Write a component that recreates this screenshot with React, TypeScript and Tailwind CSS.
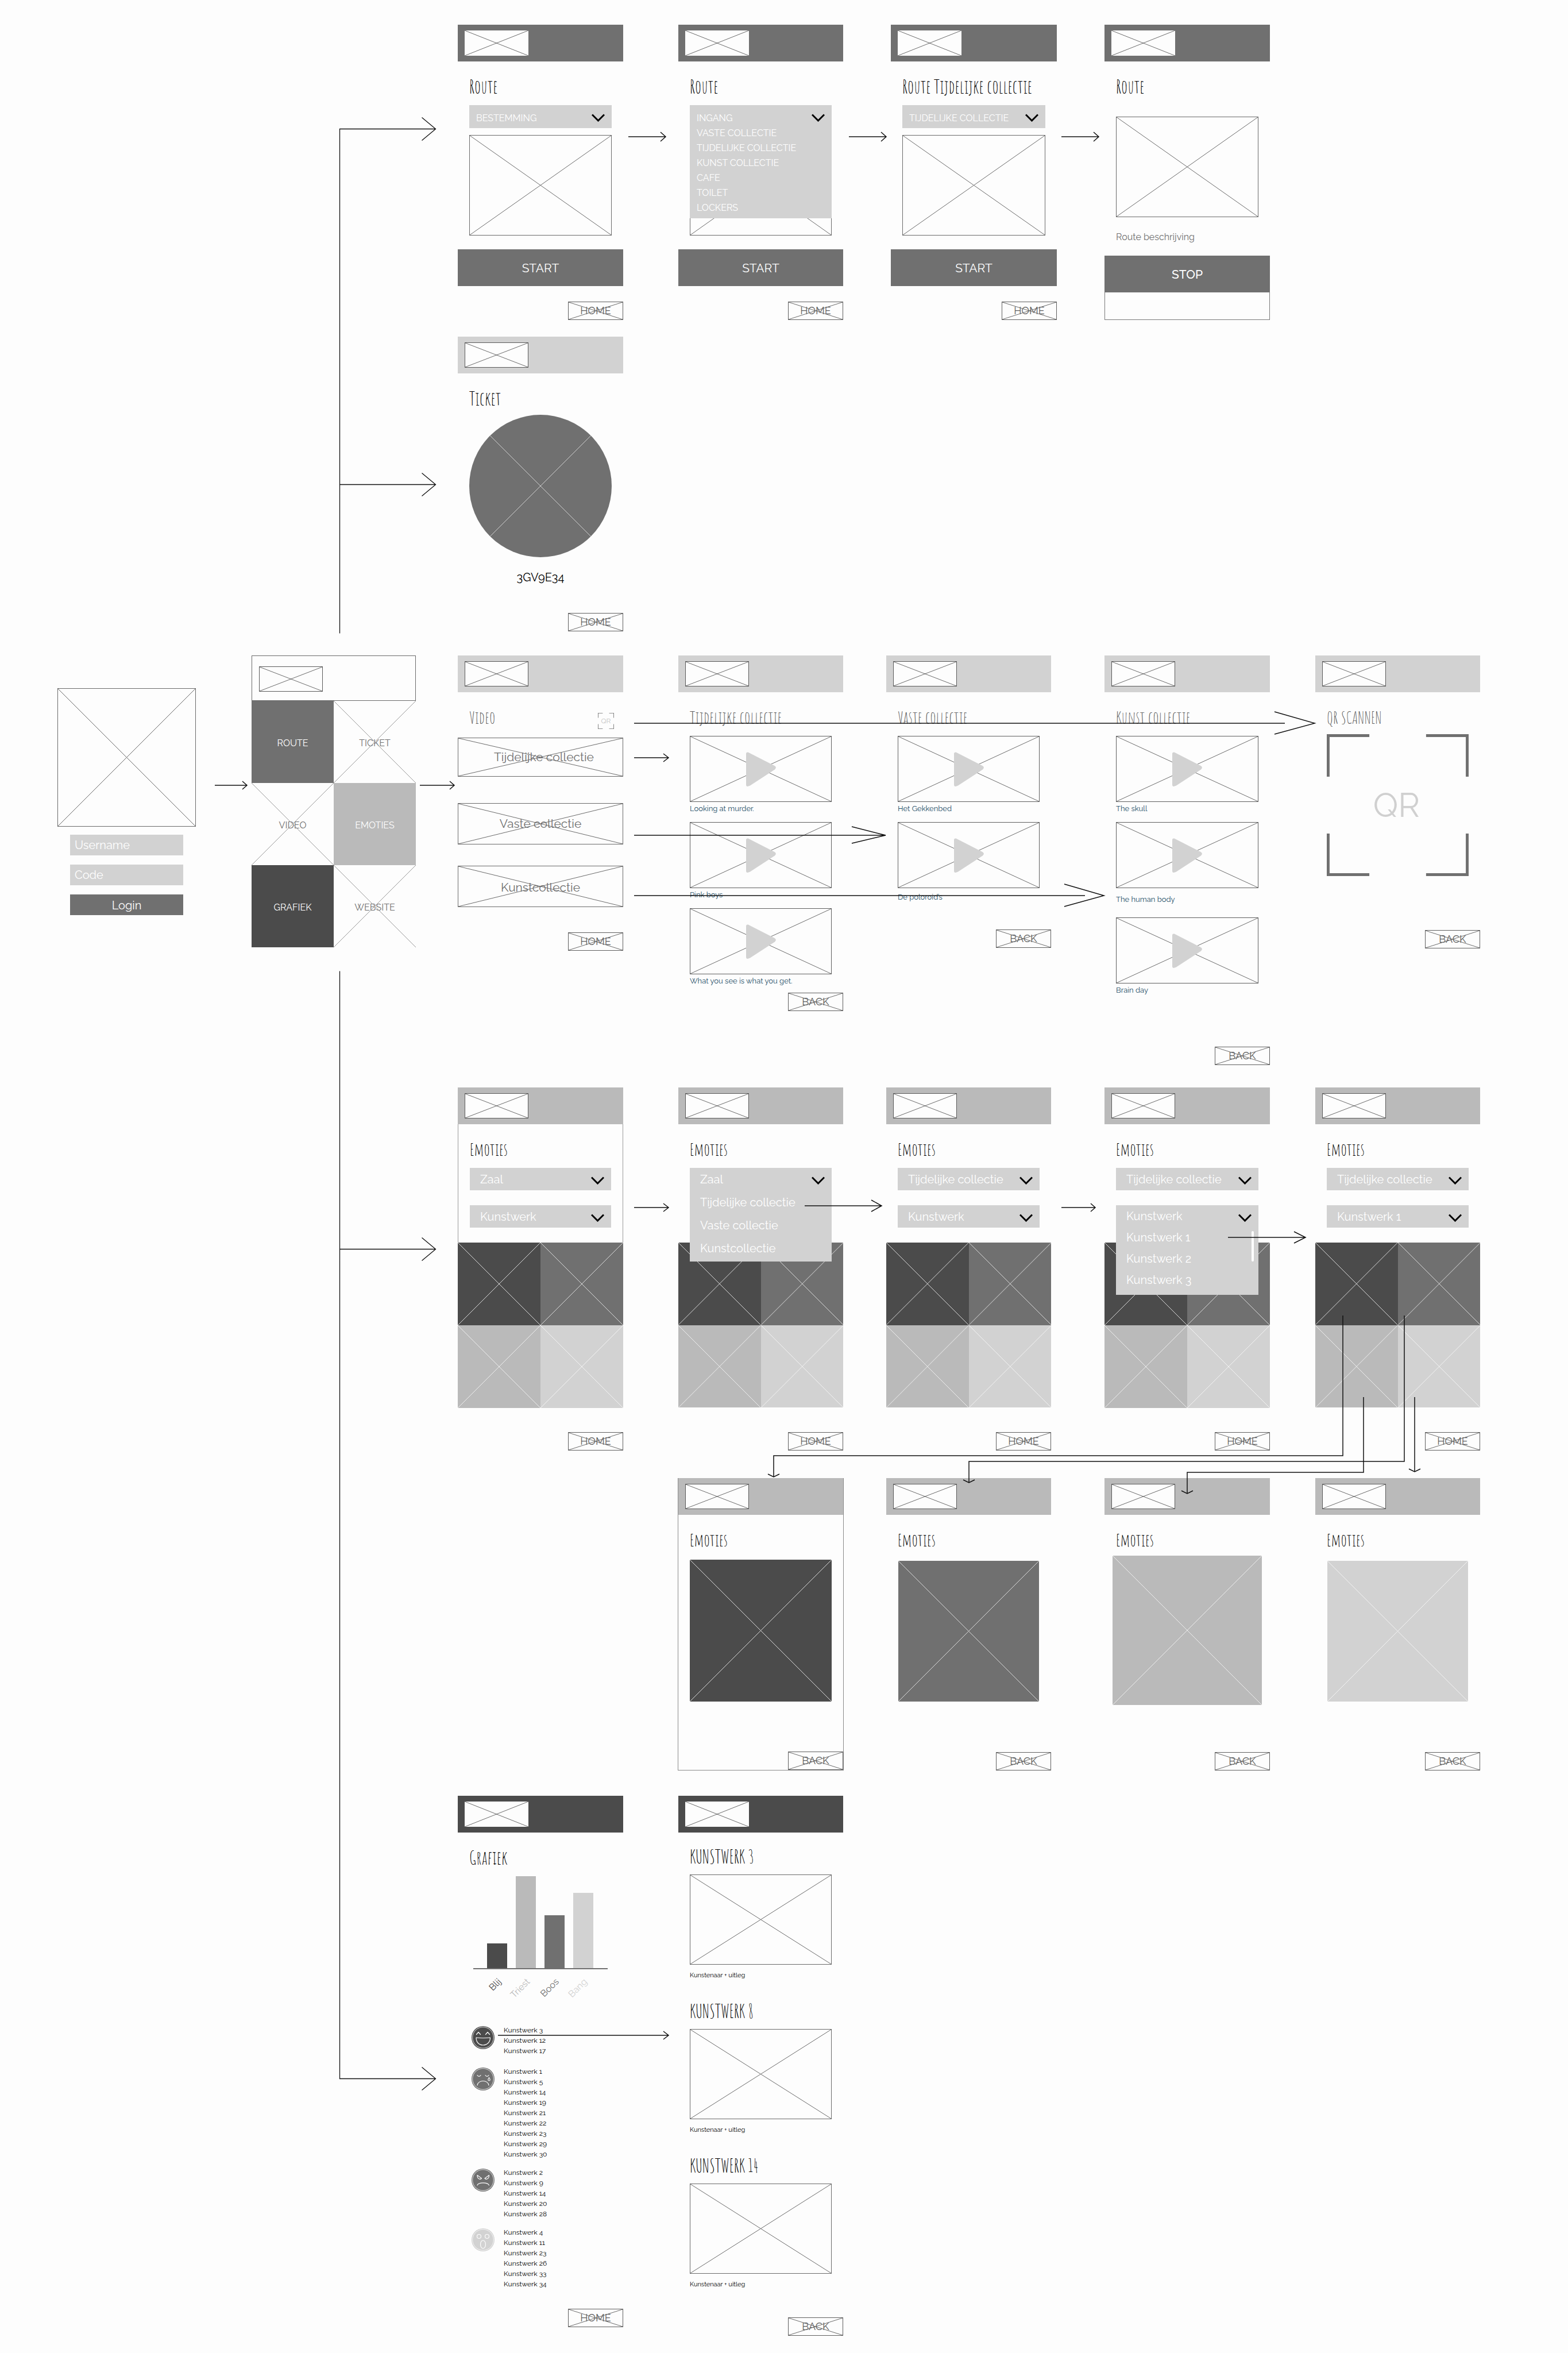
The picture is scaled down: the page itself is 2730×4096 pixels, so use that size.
import React from "react";

const BODY = "font-['Raleway','Lato','Noto_Sans',sans-serif]";
const COLS =
  "grid grid-cols-[100fr_241fr_97fr_286fr_73fr_288fr_96fr_287fr_75fr_287fr_93fr_288fr_79fr_287fr_153fr]";

function Cross({ line = "text-[#6a6a6a]" }: { line?: string }) {
  return (
    <svg
      className={`pointer-events-none absolute inset-0 h-full w-full ${line}`}
      viewBox="0 0 100 100"
      preserveAspectRatio="none"
      fill="none"
      stroke="currentColor"
      aria-hidden="true"
    >
      <path d="M0 0 100 100M100 0 0 100" vectorEffect="non-scaling-stroke" />
    </svg>
  );
}

function Picture({ size }: { size: string }) {
  return (
    <div className={`relative border border-[#6a6a6a] ${size}`}>
      <Cross />
    </div>
  );
}

function Tile({ className, line = "text-[#d8d8d8]" }: { className: string; line?: string }) {
  return (
    <div className={`relative ${className}`}>
      <Cross line={line} />
    </div>
  );
}

function Logo({ bordered = true }: { bordered?: boolean }) {
  return (
    <div
      className={`relative h-11 w-[111px] bg-[#fdfdfd] ${bordered ? "border border-[#5a5a5a]" : ""}`}
    >
      <Cross />
    </div>
  );
}

function Header({ tone, bordered }: { tone: string; bordered?: boolean }) {
  return (
    <header className={`flex h-16 items-center pl-3 ${tone}`}>
      <Logo bordered={bordered} />
    </header>
  );
}

function Title({
  children,
  tone = "text-[32px] text-black",
}: {
  children: React.ReactNode;
  tone?: string;
}) {
  return (
    <h2
      className={`font-['Amatic_SC','Lato',sans-serif] leading-8 whitespace-nowrap ${tone}`}
    >
      {children}
    </h2>
  );
}

const GREY_TITLE = "text-[30px] text-[#606060]";

function Nav({ label, className = "mt-auto" }: { label: string; className?: string }) {
  return (
    <button
      type="button"
      className={`relative h-8 w-24 shrink-0 self-end border border-[#5f5f5f] text-center text-lg leading-[30px] text-[#606060] ${className}`}
    >
      {label}
      <Cross />
    </button>
  );
}

function Chevron() {
  return (
    <svg
      className="pointer-events-none absolute top-[15px] right-3 h-[14px] w-[23px]"
      viewBox="0 0 23 14"
      fill="none"
      stroke="black"
      strokeWidth="3"
      aria-hidden="true"
    >
      <path d="M1 1.500 11.500 12 22 1.500" />
    </svg>
  );
}

function Select({
  label,
  value,
  className,
}: {
  label: string;
  value: string;
  className: string;
}) {
  return (
    <div className="relative">
      <select
        aria-label={label}
        defaultValue={value}
        className={`block w-full appearance-none bg-[#d2d2d2] text-white ${className}`}
      >
        <option>{value}</option>
      </select>
      <Chevron />
    </div>
  );
}

function OpenMenu({
  value,
  items,
  className,
  first,
  row,
  children,
}: {
  value: string;
  items: string[];
  className: string;
  first: string;
  row: string;
  children?: React.ReactNode;
}) {
  return (
    <div className={`absolute inset-x-0 top-0 z-10 bg-[#d2d2d2] text-white ${className}`}>
      <button type="button" aria-expanded="true" className={`block w-full text-left ${first}`}>
        {value}
      </button>
      <ul>
        {items.map((item) => (
          <li key={item} className={row}>
            {item}
          </li>
        ))}
      </ul>
      <Chevron />
      {children}
    </div>
  );
}

function BarButton({ label, className }: { label: string; className: string }) {
  return (
    <button type="button" className={`h-16 bg-[#707070] pt-0.5 text-[21px] text-white ${className}`}>
      {label}
    </button>
  );
}

function RouteScreen({
  title,
  col,
  children,
}: {
  title: string;
  col: string;
  children: React.ReactNode;
}) {
  return (
    <section className={`flex min-w-0 flex-col ${col}`}>
      <Header tone="bg-[#707070]" bordered={false} />
      <div className="px-5 pt-7">
        <Title>{title}</Title>
        <div className="relative mt-4 mb-3 h-10">{children}</div>
        <Picture size="h-[175px]" />
      </div>
      <BarButton label="START" className="mt-6" />
      <Nav label="HOME" className="mt-[27px]" />
    </section>
  );
}

function MenuCell({
  label,
  className,
  crossed,
}: {
  label: string;
  className: string;
  crossed?: boolean;
}) {
  return (
    <button type="button" className={`relative aspect-square pt-1 text-base ${className}`}>
      {label}
      {crossed && <Cross line="text-[#9a9a9a]" />}
    </button>
  );
}

function Video({ caption, gap = "" }: { caption: string; gap?: string }) {
  return (
    <figure>
      <div className="relative flex h-[115px] items-center justify-center border border-[#5f5f5f]">
        <Cross />
        <svg viewBox="0 0 52 60" className="relative h-[60px] w-[52px]" aria-hidden="true">
          <path
            d="M0 3Q0 0 3.500 .5L49.500 24Q54 26.500 50 30.500L7 58.500Q0 62 0 57Z"
            fill="#d2d2d2"
          />
        </svg>
      </div>
      <figcaption className={`text-[13px] leading-6 whitespace-nowrap text-[#1f4f68] ${gap}`}>
        {caption}
      </figcaption>
    </figure>
  );
}

function LinkBox({ label, className }: { label: string; className: string }) {
  return (
    <button
      type="button"
      className={`relative border border-[#6a6a6a] text-[21px] text-[#707070] ${className}`}
    >
      {label}
      <Cross />
    </button>
  );
}

function Corners({ className, stroke }: { className: string; stroke: number }) {
  return (
    <svg
      viewBox="0 0 100 100"
      className={`absolute inset-0 h-full w-full ${className}`}
      fill="none"
      stroke="currentColor"
      strokeWidth={stroke}
      aria-hidden="true"
    >
      <path d="M1 30V1H30M70 1H99V30M99 70V99H70M30 99H1V70" />
    </svg>
  );
}

function EmotionGrid() {
  return (
    <div className="mt-[26px] mb-[42px] grid grid-cols-2">
      <Tile className="aspect-square bg-[#4b4b4b]" />
      <Tile className="aspect-square bg-[#707070]" />
      <Tile className="aspect-square bg-[#bababa]" line="text-[#ececec]" />
      <Tile className="aspect-square bg-[#d2d2d2]" line="text-[#f2f2f2]" />
    </div>
  );
}

const EMO_SELECT = "h-[39px] pl-[18px] text-xl";

function EmotionScreen({
  col,
  outlined = false,
  room,
  work,
}: {
  col: string;
  outlined?: boolean;
  room: React.ReactNode;
  work: React.ReactNode;
}) {
  return (
    <section className={`flex min-w-0 flex-col ${col}`}>
      <Header tone="bg-[#bababa]" />
      <div
        className={`px-5 pt-7 ${outlined ? "-mb-[26px] border-x border-[#9a9a9a] pb-[26px]" : ""}`}
      >
        <Title tone="text-[30px] text-black">Emoties</Title>
        <div className="relative mt-4 h-[39px]">{room}</div>
        <div className="relative mt-[26px] h-[39px]">{work}</div>
      </div>
      <EmotionGrid />
      <Nav label="HOME" />
    </section>
  );
}

function EmotionDetail({
  col,
  frame,
  tile,
  line,
}: {
  col: string;
  frame: string;
  tile: string;
  line?: string;
}) {
  return (
    <section className={`flex min-h-[509px] flex-col ${col}`}>
      <Header tone="bg-[#bababa]" />
      <div className="px-5 pt-7">
        <Title tone="text-[30px] text-black">Emoties</Title>
      </div>
      <div className={frame}>
        <Tile className={`aspect-square ${tile}`} line={line} />
      </div>
      <Nav label="BACK" />
    </section>
  );
}

const BARS = [
  { name: "Blij", bar: "h-[43px] bg-[#4b4b4b]", text: "text-[#4b4b4b]" },
  { name: "Triest", bar: "h-[160px] bg-[#bababa]", text: "text-[#bababa]" },
  { name: "Boos", bar: "h-[92px] bg-[#707070]", text: "text-[#707070]" },
  { name: "Bang", bar: "h-[131px] bg-[#d2d2d2]", text: "text-[#d2d2d2]" },
];

function Face({ color, children }: { color: string; children: React.ReactNode }) {
  return (
    <svg viewBox="0 0 40 40" className="mt-0.5 h-10 w-10 shrink-0" fill="none" aria-hidden="true">
      <circle cx="20" cy="20" r="20" fill={color} />
      <circle cx="20" cy="20" r="18.300" stroke="#fdfdfd" strokeWidth=".8" />
      <g stroke="#fdfdfd" strokeWidth="1.200" strokeLinecap="round" strokeLinejoin="round">
        {children}
      </g>
    </svg>
  );
}

const GROUPS = [
  {
    works: [3, 12, 17],
    gap: "",
    face: (
      <Face color="#4b4b4b">
        <path d="M8.500 14.500 12 10.500 15.500 14.500M24.500 14.500 28 10.500 31.500 14.500M8 20Q20 21.500 32.500 20C32.500 28 27 33 20 33S8 28 8 20Z" />
      </Face>
    ),
  },
  {
    works: [1, 5, 14, 19, 21, 22, 23, 29, 30],
    gap: "mt-[18px]",
    face: (
      <Face color="#707070">
        <path d="M10 13.500Q13 17.500 16 13.500M24 13.500Q27 17.500 30 13.500M10 31C11 21 29 21 30 31M30.500 17.500C28 21 28.500 23 30.500 23S33 21 30.500 17.500" />
      </Face>
    ),
  },
  {
    works: [2, 9, 14, 20, 28],
    gap: "mt-[14px]",
    face: (
      <Face color="#707070">
        <path d="M10 11.500 17.500 17C15 19.500 10 18.500 10 11.500ZM30.500 11.500 23 17C25.500 19.500 30.500 18.500 30.500 11.500ZM10 29C12 23.500 28 23.500 30.500 29" />
      </Face>
    ),
  },
  {
    works: [4, 11, 23, 26, 33, 34],
    gap: "mt-[14px]",
    face: (
      <Face color="#d2d2d2">
        <circle cx="13" cy="14" r="3.500" />
        <circle cx="27" cy="14" r="3.500" />
        <ellipse cx="20" cy="28" rx="4.500" ry="7" />
      </Face>
    ),
  },
];

function Arrows() {
  return (
    <svg
      className="pointer-events-none absolute inset-0 z-20 h-full w-full"
      viewBox="0 0 2730 4096"
      preserveAspectRatio="none"
      fill="none"
      stroke="#111"
      strokeWidth="1.500"
      aria-hidden="true"
    >
      {/* trunk */}
      <g strokeWidth="1.300" transform="translate(.5 .5)">
        <path d="M591 1102V224H758M734 204 758 224 734 244M591 843H758M734 823 758 843 734 863" />
        <path d="M591 1690V3618H758M734 3598 758 3618 734 3638M591 2174H758M734 2154 758 2174 734 2194" />
      </g>
      {/* route */}
      <path d="M1094 238H1159M1150 230 1159 238 1150 246M1478 238H1543M1534 230 1543 238 1534 246M1848 238H1913M1904 230 1913 238 1904 246" />
      {/* login and menu */}
      <path d="M374 1367H430M422 1360 430 1367 422 1374M731 1367H791M783 1360 791 1367 783 1374" />
      {/* video */}
      <path d="M1104 1319H1164M1155 1312 1164 1319 1155 1326" />
      <path d="M1104 1259H2237M2219 1239 2289 1259 2219 1278" />
      <path d="M1104 1454H1542M1483 1439 1542 1454 1483 1468" />
      <path d="M1104 1559H1889M1853 1539 1922 1559 1853 1578" />
      {/* emoties */}
      <path d="M1104 2102H1164M1155 2095 1164 2102 1155 2109M1401 2099H1535M1517 2089 1535 2099 1517 2109" />
      <path d="M1848 2102H1907M1899 2095 1907 2102 1899 2109M2138 2154H2273M2253 2144 2273 2154 2253 2164" />
      <path d="M2338 2290V2534H1347V2571M1337 2566 1347 2571 1357 2566" />
      <path d="M2445 2290V2544H1687V2581M1677 2576 1687 2581 1697 2576" />
      <path d="M2374 2432V2563H2067V2600M2057 2595 2067 2600 2077 2595" />
      <path d="M2463 2432V2562M2453 2557 2463 2562 2473 2557" />
      {/* grafiek */}
      <path d="M867 3543H1164M1155 3536 1164 3543 1155 3550" />
    </svg>
  );
}

export default function App() {
  return (
    <main className={`relative min-h-screen w-full bg-[#fdfdfd] pt-[43px] pb-[30px] ${BODY}`}>
      <Arrows />

      <div className={COLS}>
        <RouteScreen title="Route" col="col-start-6">
          <Select label="Bestemming" value="BESTEMMING" className="h-10 pt-1.5 pl-3 text-base" />
        </RouteScreen>
        <RouteScreen title="Route" col="col-start-8">
          <OpenMenu
            value="INGANG"
            items={[
              "VASTE COLLECTIE",
              "TIJDELIJKE COLLECTIE",
              "KUNST COLLECTIE",
              "CAFE",
              "TOILET",
              "LOCKERS",
            ]}
            className="pt-2.5 pb-[5px] pl-3 text-base"
            first="leading-[26px]"
            row="leading-[26px]"
          />
        </RouteScreen>
        <RouteScreen title="Route Tijdelijke collectie" col="col-start-10 ml-2 -mr-2.5">
          <Select label="Route" value="TIJDELIJKE COLLECTIE" className="h-10 pt-1.5 pl-3 text-base" />
        </RouteScreen>
        <section className="col-start-12 flex flex-col">
          <Header tone="bg-[#707070]" bordered={false} />
          <div className="px-5 pt-7">
            <Title>Route</Title>
            <div className="mt-9" />
            <Picture size="h-[175px]" />
            <p className="mt-[23px] text-base leading-6 text-[#707070]">Route beschrijving</p>
          </div>
          <BarButton label="STOP" className="mt-5 font-medium" />
          <div className="h-12 border border-t-0 border-[#7a7a7a]" />
        </section>
      </div>

      <div className={`mt-[29px] ${COLS}`}>
        <section className="col-start-6 flex flex-col">
          <Header tone="bg-[#d2d2d2]" />
          <div className="px-5 pt-7">
            <Title>Ticket</Title>
            <Tile
              className="mt-3 aspect-square overflow-hidden rounded-full bg-[#707070]"
              line="text-[#cfcfcf]"
            />
            <p className="mt-[21px] text-center text-xl leading-7 text-black">3GV9E34</p>
          </div>
          <Nav label="HOME" className="mt-12" />
        </section>
      </div>

      <div className={`mt-[42px] items-start ${COLS}`}>
        <form className="col-start-2 mt-[57px]" onSubmit={(e) => e.preventDefault()}>
          <Picture size="aspect-square" />
          <div className="mt-[14px] flex flex-col gap-4 px-[22px]">
            <input
              aria-label="Username"
              placeholder="Username"
              className="h-9 w-full bg-[#d2d2d2] px-2 text-xl text-white placeholder:text-white"
            />
            <input
              aria-label="Code"
              placeholder="Code"
              className="h-9 w-full bg-[#d2d2d2] px-2 text-xl text-white placeholder:text-white"
            />
            <button type="submit" className="h-9 bg-[#707070] pt-0.5 text-xl text-white">
              Login
            </button>
          </div>
        </form>

        <nav className="col-start-4">
          <div className="h-[79px] border border-[#6a6a6a] pt-[18px] pl-3">
            <Logo />
          </div>
          <div className="grid grid-cols-2">
            <MenuCell label="ROUTE" className="bg-[#707070] text-white" />
            <MenuCell label="TICKET" className="text-[#707070]" crossed />
            <MenuCell label="VIDEO" className="text-[#707070]" crossed />
            <MenuCell label="EMOTIES" className="bg-[#bababa] text-white" />
            <MenuCell label="GRAFIEK" className="bg-[#4b4b4b] text-white" />
            <MenuCell label="WEBSITE" className="text-[#707070]" crossed />
          </div>
        </nav>

        <section className="col-start-6 flex flex-col">
          <Header tone="bg-[#d2d2d2]" />
          <div className="flex h-[79px] items-start justify-between pt-7 pr-4 pl-5">
            <Title tone={GREY_TITLE}>Video</Title>
            <div className="relative mt-2 flex h-7 w-7 items-center justify-center text-xs text-[#c4c4c4]">
              <Corners className="text-[#707070]" stroke={4} />
              QR
            </div>
          </div>
          <LinkBox label="Tijdelijke collectie" className="h-[68px] pl-3" />
          <LinkBox label="Vaste collectie" className="mt-[46px] h-[72px]" />
          <LinkBox label="Kunstcollectie" className="mt-[37px] h-[72px] pt-1" />
          <Nav label="HOME" className="mt-11" />
        </section>

        <section className="col-start-8 flex flex-col">
          <Header tone="bg-[#d2d2d2]" />
          <div className="px-5 pt-7">
            <Title tone={GREY_TITLE}>Tijdelijke collectie</Title>
            <div className="mt-4 flex flex-col gap-[11px]">
              <Video caption="Looking at murder." />
              <Video caption="Pink boys" />
              <Video caption="What you see is what you get." />
            </div>
          </div>
          <Nav label="BACK" className="mt-2" />
        </section>

        <section className="col-start-10 flex flex-col">
          <Header tone="bg-[#d2d2d2]" />
          <div className="px-5 pt-7">
            <Title tone={GREY_TITLE}>Vaste collectie</Title>
            <div className="mt-4 flex flex-col gap-[11px]">
              <Video caption="Het Gekkenbed" />
              <Video caption="De poloroid’s" gap="mt-1" />
            </div>
          </div>
          <Nav label="BACK" className="mt-11" />
        </section>

        <section className="col-start-12 flex flex-col">
          <Header tone="bg-[#d2d2d2]" />
          <div className="px-5 pt-7">
            <Title tone={GREY_TITLE}>Kunst collectie</Title>
            <div className="mt-4 flex flex-col gap-[11px]">
              <Video caption="The skull" />
              <Video caption="The human body" gap="mt-2 mb-2" />
              <Video caption="Brain day" />
            </div>
          </div>
          <Nav label="BACK" className="mt-[86px]" />
        </section>

        <section className="col-start-14 flex flex-col">
          <Header tone="bg-[#d2d2d2]" />
          <div className="px-5 pt-7">
            <Title tone={GREY_TITLE}>QR SCANNEN</Title>
            <div className="relative mt-[13px] flex aspect-square items-center justify-center pr-1 text-[58px] text-[#d0d0d0]">
              <Corners className="text-[#707070]" stroke={2} />
              QR
            </div>
          </div>
          <Nav label="BACK" className="mt-[94px]" />
        </section>
      </div>

      <div className={`mt-[39px] ${COLS}`}>
        <EmotionScreen
          col="col-start-6"
          outlined
          room={<Select label="Zaal" value="Zaal" className={EMO_SELECT} />}
          work={<Select label="Kunstwerk" value="Kunstwerk" className={EMO_SELECT} />}
        />
        <EmotionScreen
          col="col-start-8"
          room={
            <OpenMenu
              value="Zaal"
              items={["Tijdelijke collectie", "Vaste collectie", "Kunstcollectie"]}
              className="pb-[3px] pl-[18px] text-xl"
              first="h-10"
              row="leading-10"
            />
          }
          work={null}
        />
        <EmotionScreen
          col="col-start-10"
          room={<Select label="Zaal" value="Tijdelijke collectie" className={EMO_SELECT} />}
          work={<Select label="Kunstwerk" value="Kunstwerk" className={EMO_SELECT} />}
        />
        <EmotionScreen
          col="col-start-12"
          room={<Select label="Zaal" value="Tijdelijke collectie" className={EMO_SELECT} />}
          work={
            <OpenMenu
              value="Kunstwerk"
              items={["Kunstwerk 1", "Kunstwerk 2", "Kunstwerk 3"]}
              className="pb-[7px] pl-[18px] text-xl"
              first="h-[38px]"
              row="leading-[37px]"
            >
              <span className="absolute top-[45px] right-2 h-[53px] w-1 rounded-full bg-white" />
            </OpenMenu>
          }
        />
        <EmotionScreen
          col="col-start-14"
          room={<Select label="Zaal" value="Tijdelijke collectie" className={EMO_SELECT} />}
          work={<Select label="Kunstwerk" value="Kunstwerk 1" className={EMO_SELECT} />}
        />
      </div>

      <div className={`mt-12 ${COLS}`}>
        <EmotionDetail
          col="col-start-8 -mx-px border-x border-b border-[#8a8a8a]"
          frame="px-5 pt-[18px]"
          tile="bg-[#4b4b4b]"
        />
        <EmotionDetail col="col-start-10" frame="px-[21px] pt-5" tile="bg-[#707070]" />
        <EmotionDetail
          col="col-start-12"
          frame="px-[14px] pt-[11px]"
          tile="bg-[#bababa]"
          line="text-[#ececec]"
        />
        <EmotionDetail
          col="col-start-14"
          frame="px-[21px] pt-5"
          tile="bg-[#d2d2d2]"
          line="text-[#f2f2f2]"
        />
      </div>

      <div className={`mt-[44px] items-start ${COLS}`}>
        <section className="col-start-6 flex flex-col">
          <Header tone="bg-[#4b4b4b]" bordered={false} />
          <div className="px-5 pt-7">
            <Title>Grafiek</Title>
          </div>
          <div className="mx-[27px] mt-4 flex h-[162px] items-end gap-[15px] border-b-2 border-[#707070] pl-6">
            {BARS.map((b) => (
              <div key={b.name} className={`w-[35px] ${b.bar}`} />
            ))}
          </div>
          <div className="mx-[27px] flex h-[97px] gap-[15px] pt-3 pl-6">
            {BARS.map((b) => (
              <div key={b.name} className="flex w-[35px] items-start justify-end pr-5">
                <span
                  className={`origin-top-right -rotate-45 text-base leading-5 whitespace-nowrap ${b.text}`}
                >
                  {b.name}
                </span>
              </div>
            ))}
          </div>
          {GROUPS.map((g) => (
            <div key={g.works[0]} className={`flex gap-4 pl-6 ${g.gap}`}>
              {g.face}
              <ul className="text-xs leading-[18px] text-black">
                {g.works.map((n) => (
                  <li key={n}>Kunstwerk {n}</li>
                ))}
              </ul>
            </div>
          ))}
          <Nav label="HOME" className="mt-[34px]" />
        </section>

        <section className="col-start-8 flex min-h-[940px] flex-col">
          <Header tone="bg-[#4b4b4b]" bordered={false} />
          <div className="flex flex-col gap-[34px] px-5 pt-[26px]">
            {[3, 8, 14].map((n) => (
              <article key={n}>
                <Title>KUNSTWERK {n}</Title>
                <div className="mt-[15px]" />
                <Picture size="h-[157px]" />
                <p className="mt-[7px] text-[11px] leading-6 text-black">Kunstenaar + uitleg</p>
              </article>
            ))}
          </div>
          <Nav label="BACK" />
        </section>
      </div>
    </main>
  );
}
